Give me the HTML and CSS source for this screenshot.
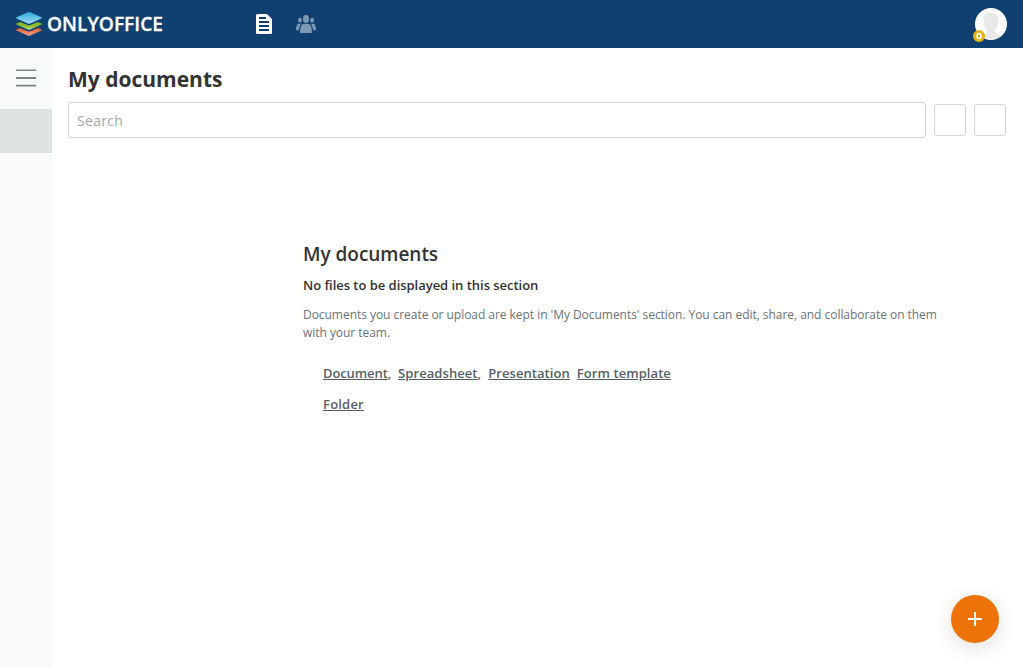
FILE: index.html
```html
<!DOCTYPE html>
<html lang="en">
<head>
<meta charset="utf-8">
<title>My documents</title>
<link rel="stylesheet" href="styles.css">
</head>
<body>
<header class="header">
  <a class="logo">
    <svg class="logo-mark" width="26" height="24" viewBox="0 0 26 24">
      <defs>
        <linearGradient id="blue" x1="0" y1="0" x2="0" y2="1"><stop offset="0" stop-color="#27a9e1"/><stop offset="1" stop-color="#a5dbf2"/></linearGradient>
        <linearGradient id="green" x1="0" y1="0" x2="0" y2="1"><stop offset="0" stop-color="#7fb51c"/><stop offset=".5" stop-color="#8fbf2c"/><stop offset="1" stop-color="#c5dd8c"/></linearGradient>
        <linearGradient id="red" x1="0" y1="0" x2="0" y2="1"><stop offset="0" stop-color="#e8562c"/><stop offset="1" stop-color="#f5a488"/></linearGradient>
      </defs>
      <path fill="url(#red)" d="M.6 17.4 4 15.9l7.800 3.300q1.200.5 2.400 0l7.800-3.300 3.400 1.500q1 .6 0 1.200l-11.200 5q-1.200.5-2.400 0L.6 18.600q-1-.6 0-1.200z"/>
      <path fill="url(#green)" d="M.6 11.400 4 9.900l7.800 3q1.200.5 2.400 0L22 9.900l3.400 1.500q1 .6 0 1.200l-11.200 5q-1.200.5-2.400 0L.6 12.600q-1-.6 0-1.200z"/>
      <path fill="url(#blue)" d="M.6 5.200 11.800.3q1.200-.5 2.400 0l11.200 4.900q1 .6 0 1.200l-11.200 5q-1.200.5-2.400 0L.6 6.400q-1-.6 0-1.200z"/>
    </svg>
    <svg class="logo-name" width="130" height="32"><text x="0" y="23" textLength="116" lengthAdjust="spacingAndGlyphs">ONLYOFFICE</text></svg>
  </a>
  <nav class="modules">
    <svg width="16" height="20" viewBox="0 0 16 20"><path fill="#fff" fill-rule="evenodd" d="M1.500 0H11l5 5v13.500q0 1.500-1.500 1.500h-13Q0 20 0 18.500v-17Q0 0 1.500 0zM3 3v2h7V3zm0 4v2h10V7zm0 4v2h10v-2zm0 4v2h10v-2z"/></svg>
    <svg width="20" height="18" viewBox="0 0 20 18" fill="#7f99b4"><ellipse cx="10" cy="4" rx="3" ry="4"/><ellipse cx="3.900" cy="5.200" rx="1.900" ry="2.400"/><ellipse cx="16.100" cy="5.200" rx="1.900" ry="2.400"/><path d="M4 17.200Q4.300 11 6.500 9.300q1-.8 1.700-.5 1.800.9 3.600 0 .7-.3 1.700.5Q15.700 11 16 17.200q0 .8-1 .8H5q-1 0-1-.8zM2.300 8.600q1.600.7 2.900 0-1.900 2.400-2.400 6.700H.8q-.9 0-.8-1 .3-4.500 2.300-5.700zM17.700 8.600q-1.600.7-2.900 0 1.900 2.400 2.400 6.700h2q.9 0 .8-1-.3-4.500-2.300-5.700z"/></svg>
  </nav>
  <div class="avatar">
    <svg width="32" height="32" viewBox="0 0 32 32"><circle cx="16" cy="16" r="16" fill="#fff"/><path fill="#e9e9e9" d="M16 4.500c5.200 0 7.800 3.600 7.500 8.500-.1 4.500-1.500 7-3.700 9.200-.2 2.400.7 3 3.200 4l2.600 1a14.400 14.400 0 0 1-19.200 0l2.600-1c2.500-1 3.400-1.600 3.200-4C10 20 8.600 17.500 8.500 13 8.200 8.100 10.800 4.500 16 4.500z"/></svg>
    <svg class="owner" width="12" height="12" viewBox="0 0 12 12"><circle cx="6" cy="6" r="6" fill="#dfb40c"/><ellipse cx="6" cy="6" rx="1.900" ry="2.400" fill="#c99b00" stroke="#fff" stroke-width="1.600"/></svg>
  </div>
</header>
<div class="layout">
  <aside class="sidebar">
    <div class="burger"><svg width="20" height="18" viewBox="0 0 20 18" fill="#7a8489"><path d="M0 .5h20v1.600H0zM0 8h20v2H0zM0 15.800h20v1.600H0z"/></svg></div>
    <div class="active-item"></div>
  </aside>
  <main class="content">
    <h1>My documents</h1>
    <div class="filter">
      <input class="search" placeholder="Search">
      <button class="filter-button"></button>
      <button class="filter-button"></button>
    </div>
    <section class="empty">
      <h2>My documents</h2>
      <h3>No files to be displayed in this section</h3>
      <p>Documents you create or upload are kept in 'My Documents' section. You can edit, share, and collaborate on them with your team.</p>
      <div class="links"><span class="tight"><a>Document</a>,</span><span><a>Spreadsheet</a>,</span><a>Presentation</a><a>Form template</a></div>
      <div class="links folder"><a>Folder</a></div>
    </section>
  </main>
</div>
<button class="create"><svg width="14" height="14" viewBox="0 0 14 14"><path fill="#fff" d="M6 0h2v6h6v2H8v6H6V8H0V6h6z"/></svg></button>
</body>
</html>
```

FILE: styles.css
```css
* { box-sizing: border-box; }
body { margin: 0; height: 667px; overflow: hidden; background: #fff; color: #333; font-family: "Open Sans", sans-serif; }
svg { display: block; }
h1, h2, h3, p { margin: 0; }
.header { display: flex; align-items: center; height: 48px; padding: 0 16px; background: #0f4071; }
.logo { display: flex; align-items: center; gap: 5px; width: 240px; }
.logo-name text { fill: #fff; font: 600 20px "Open Sans", sans-serif; stroke: #fff; stroke-width: .3px; }
.modules { display: flex; align-items: center; gap: 24px; }
.avatar { position: relative; margin-left: auto; }
.owner { position: absolute; left: -2px; bottom: -2px; }
.layout { display: flex; height: 619px; }
.sidebar { width: 52px; background: #f8f9f9; }
.burger { height: 61px; padding: 21px 16px 0; }
.active-item { height: 44px; background: #dfe2e3; }
.content { flex: 1; padding: 16px 17px 0 16px; }
h1 { height: 38px; font-size: 21px; line-height: 30px; font-weight: 700; }
.filter { display: flex; align-items: center; gap: 8px; }
.search { flex: 1; height: 36px; padding: 0 8px; border: 1px solid #d0d5da; border-radius: 3px; background: #fff; font: 14px "Open Sans", sans-serif; letter-spacing: .3px; outline: 0; }
.search::placeholder { color: #a3a9ae; }
.filter-button { width: 32px; height: 32px; padding: 0; border: 1px solid #d0d5da; border-radius: 3px; background: #fff; }
.empty { width: 640px; margin: 103px 0 0 235px; }
h2 { font-size: 19px; line-height: 26px; font-weight: 600; letter-spacing: -.03px; }
h3 { margin-top: 9px; font-size: 13px; line-height: 18px; font-weight: 600; letter-spacing: -.03px; }
p { margin-top: 12px; color: #6a7378; font-size: 12px; line-height: 18px; letter-spacing: -.04px; }
.links { display: flex; gap: 7px; margin: 22px 0 0 20px; color: #555f65; font-size: 13px; line-height: 18px; font-weight: 600; letter-spacing: .07px; }
.links + .links { margin-top: 13px; }
.links a { text-decoration: underline; }
.tight { letter-spacing: -.1px; }
.folder { letter-spacing: .2px; }
.create { position: fixed; right: 24px; bottom: 24px; display: flex; align-items: center; justify-content: center; width: 48px; height: 48px; padding: 0; border: 0; border-radius: 50%; background: #ed7309; box-shadow: 0 5px 20px rgba(4, 15, 27, .13); }
```
